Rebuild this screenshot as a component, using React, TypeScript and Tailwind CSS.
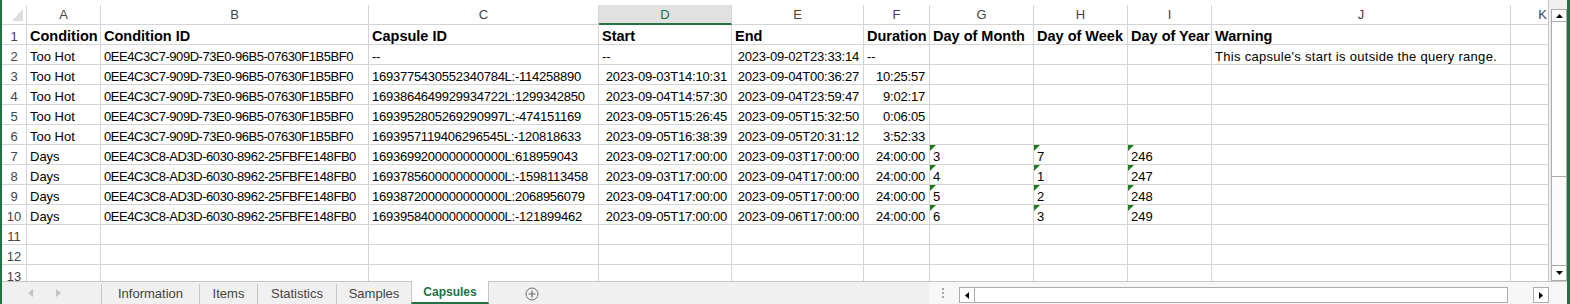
import React from 'react';

const FONT = "font-['Liberation_Sans',Arial,sans-serif]";

// column widths in px, K is wider but gets clipped by the scrollbar
const colW = ['w-[74px]', 'w-[268px]', 'w-[230px]', 'w-[133px]', 'w-[132px]', 'w-[66px]', 'w-[104px]', 'w-[94px]', 'w-[84px]', 'w-[299px]', 'w-[64px]'];
// body text spacing per column, to get closer to Excel's hinted Calibri widths
const colTrack = [
  '',
  'tracking-[-0.45px]',
  'tracking-[-0.25px]',
  'tracking-[-0.2px]',
  'tracking-[-0.2px]',
  'tracking-[-0.2px]',
  '',
  '',
  '',
  'tracking-[0.3px]',
  '',
];
const letters = ['A', 'B', 'C', 'D', 'E', 'F', 'G', 'H', 'I', 'J', 'K'];

const ID1 = '0EE4C3C7-909D-73E0-96B5-07630F1B5BF0';
const ID2 = '0EE4C3C8-AD3D-6030-8962-25FBFE148FB0';

const rows: string[][] = [
  ['Condition', 'Condition ID', 'Capsule ID', 'Start', 'End', 'Duration', 'Day of Month', 'Day of Week', 'Day of Year', 'Warning', ''],
  ['Too Hot', ID1, '--', '--', '2023-09-02T23:33:14', '--', '', '', '', "This capsule's start is outside the query range.", ''],
  ['Too Hot', ID1, '1693775430552340784L:-114258890', '2023-09-03T14:10:31', '2023-09-04T00:36:27', '10:25:57', '', '', '', '', ''],
  ['Too Hot', ID1, '1693864649929934722L:1299342850', '2023-09-04T14:57:30', '2023-09-04T23:59:47', '9:02:17', '', '', '', '', ''],
  ['Too Hot', ID1, '1693952805269290997L:-474151169', '2023-09-05T15:26:45', '2023-09-05T15:32:50', '0:06:05', '', '', '', '', ''],
  ['Too Hot', ID1, '1693957119406296545L:-120818633', '2023-09-05T16:38:39', '2023-09-05T20:31:12', '3:52:33', '', '', '', '', ''],
  ['Days', ID2, '1693699200000000000L:618959043', '2023-09-02T17:00:00', '2023-09-03T17:00:00', '24:00:00', '3', '7', '246', '', ''],
  ['Days', ID2, '1693785600000000000L:-1598113458', '2023-09-03T17:00:00', '2023-09-04T17:00:00', '24:00:00', '4', '1', '247', '', ''],
  ['Days', ID2, '1693872000000000000L:2068956079', '2023-09-04T17:00:00', '2023-09-05T17:00:00', '24:00:00', '5', '2', '248', '', ''],
  ['Days', ID2, '1693958400000000000L:-121899462', '2023-09-05T17:00:00', '2023-09-06T17:00:00', '24:00:00', '6', '3', '249', '', ''],
  ['', '', '', '', '', '', '', '', '', '', ''],
  ['', '', '', '', '', '', '', '', '', '', ''],
  ['', '', '', '', '', '', '', '', '', '', ''],
];

const isNumeric = (s: string) => /T\d\d:\d\d:\d\d$/.test(s) || /^\d+:\d\d:\d\d$/.test(s);

const Cell = ({ w, track, text, bold, flag }: { w: string; track: string; text: string; bold: boolean; flag: boolean }) => {
  const right = isNumeric(text);
  return (
    <div
      className={`${w} shrink-0 h-[20px] border-r border-b border-[#d4d4d4] flex items-end relative ${right ? 'justify-end pr-[4px]' : 'pl-[3px]'}`}
    >
      {flag && (
        <svg className="absolute left-0 top-0" width="6" height="6" viewBox="0 0 6 6">
          <polygon points="0,0 6,0 0,6" fill="#1e7b1e" />
        </svg>
      )}
      <span className={`whitespace-nowrap text-black ${bold ? 'font-bold text-[14.5px] leading-[15px]' : `text-[13px] leading-[15px] ${track}`}`}>{text}</span>
    </div>
  );
};

const Arrow = ({ dir }: { dir: 'up' | 'down' | 'left' | 'right' }) => {
  const pts = {
    up: '0,4 7,4 3.5,0',
    down: '0,0 7,0 3.5,4',
    left: '4,0 4,7 0,3.5',
    right: '0,0 0,7 4,3.5',
  }[dir];
  const vert = dir === 'up' || dir === 'down';
  return (
    <svg width={vert ? 7 : 4} height={vert ? 4 : 7} viewBox={vert ? '0 0 7 4' : '0 0 4 7'}>
      <polygon points={pts} fill="#000" />
    </svg>
  );
};

const Sheet = () => (
  <div className="w-[1547px] h-full border-r border-[#c6c6c6] overflow-hidden bg-white">
    {/* column headers */}
    <div className="flex pt-[5px] w-max">
      <div className="w-[25px] shrink-0 h-[20px] border-r border-b border-[#d4d4d4] relative">
        <svg className="absolute left-[10px] top-[4px]" width="11" height="12" viewBox="0 0 11 12">
          <polygon points="11,0 11,12 0,12" fill="#dcdcdc" />
        </svg>
      </div>
      {letters.map((l, i) => (
        <div
          key={l}
          className={`${colW[i]} shrink-0 h-[20px] border-r flex items-center justify-center text-[13px] leading-[15px] ${
            i === 3 ? 'bg-[#e1e1e1] text-[#217346] border-b-2 border-b-[#217346] border-r-[#d4d4d4]' : 'text-[#444] border-b border-[#d4d4d4]'
          }`}
        >
          {l}
        </div>
      ))}
    </div>

    {/* rows */}
    {rows.map((r, ri) => (
      <div key={ri} className="flex w-max">
        <div className="w-[25px] shrink-0 h-[20px] border-r border-b border-[#d4d4d4] flex items-end justify-center text-[13px] leading-[15px] text-[#444]">
          {ri + 1}
        </div>
        {r.map((c, ci) => (
          <Cell key={ci} w={colW[ci]} track={colTrack[ci]} text={c} bold={ri === 0} flag={ri >= 6 && ri <= 9 && ci >= 6 && ci <= 8} />
        ))}
      </div>
    ))}
  </div>
);

const VScroll = () => (
  <div className="w-[18px] h-full bg-[#f0f0f0] pt-[9px] pl-[2px]">
    <div className="w-[16px] h-full border border-[#ababab] bg-white flex flex-col">
      <div className="h-[12px] border-b border-[#ababab] flex items-center justify-center">
        <Arrow dir="up" />
      </div>
      <div className="h-[155px] border-b border-[#ababab] bg-white" />
      <div className="flex-1 bg-[#fbfbfb]" />
      <div className="h-[15px] border-t border-[#ababab] flex items-center justify-center">
        <Arrow dir="down" />
      </div>
    </div>
  </div>
);

const tabs = [
  { name: 'Information', w: 'w-[98px]' },
  { name: 'Items', w: 'w-[58px]' },
  { name: 'Statistics', w: 'w-[79px]' },
  { name: 'Samples', w: 'w-[75px]' },
];

const TabBar = () => (
  <div className="h-[23px] border-t border-[#c6c6c6] bg-[#f0f0f0] flex">
    <div className="w-[927px] shrink-0 flex items-end">
      {/* sheet navigation */}
      <div className="w-[99px] h-full flex items-center pl-[26px] gap-[23px]">
        <svg width="5" height="8" viewBox="0 0 5 8">
          <polygon points="5,0 5,8 0,4" fill="#c2c2c2" />
        </svg>
        <svg width="5" height="8" viewBox="0 0 5 8">
          <polygon points="0,0 0,8 5,4" fill="#c2c2c2" />
        </svg>
      </div>
      {tabs.map((t) => (
        <div
          key={t.name}
          className={`${t.w} shrink-0 h-[20px] border-l border-[#c6c6c6] flex items-center justify-center text-[13px] text-[#444] pb-[1px]`}
        >
          {t.name}
        </div>
      ))}
      <div className="w-[78px] shrink-0 h-[23px] bg-white border-l border-r border-[#c6c6c6] border-b-2 border-b-[#217346] flex items-center justify-center pt-[1px] text-[12px] font-bold text-[#217346]">
        Capsules
      </div>
      <div className="ml-[36px] h-full flex items-center pt-[1px]">
        <svg width="14" height="14" viewBox="0 0 14 14">
          <circle cx="7" cy="7" r="6" fill="none" stroke="#6b6b6b" strokeWidth="1" />
          <path d="M7 3.5 V10.5 M3.5 7 H10.5" stroke="#6b6b6b" strokeWidth="1.2" />
        </svg>
      </div>
    </div>

    {/* horizontal scrollbar */}
    <div className="flex-1 bg-[#f7f7f7] flex items-start pl-[13px]">
      <div className="mt-[6px] flex flex-col gap-[2px]">
        <div className="w-[2px] h-[2px] bg-[#a6a6a6]" />
        <div className="w-[2px] h-[2px] bg-[#a6a6a6]" />
        <div className="w-[2px] h-[2px] bg-[#a6a6a6]" />
      </div>
      <div className="ml-[15px] mt-[5px] w-[16px] h-[16px] border border-[#ababab] bg-white flex items-center justify-center">
        <Arrow dir="left" />
      </div>
      <div className="-ml-px mt-[5px] w-[534px] h-[16px] border border-[#ababab] bg-white" />
      <div className="ml-[25px] mt-[5px] w-[16px] h-[16px] border border-[#ababab] bg-white flex items-center justify-center">
        <Arrow dir="right" />
      </div>
    </div>
  </div>
);

export default function App() {
  return (
    <div className={`${FONT} w-[1570px] h-[304px] flex bg-white overflow-hidden border-l-2 border-r-[3px] border-[#217346]`}>
      <div className="flex-1 flex flex-col min-w-0">
        <div className="h-[281px] flex">
          <Sheet />
          <VScroll />
        </div>
        <TabBar />
      </div>
    </div>
  );
}
